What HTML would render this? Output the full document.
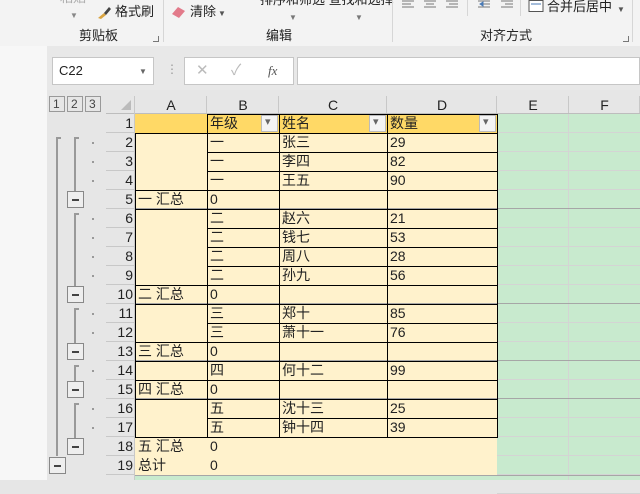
<!DOCTYPE html>
<html><head><meta charset="utf-8">
<style>
*{margin:0;padding:0;box-sizing:border-box}
body{width:640px;height:480px;overflow:hidden;position:relative;background:#e6e6e6;font-family:"Liberation Sans","Noto Sans CJK SC",sans-serif;color:#222}
.a{position:absolute}
.t{position:absolute;font-size:14px;line-height:19px;white-space:nowrap}
.rb{font-size:13px}
</style></head><body>
<!-- ribbon -->
<div class="a" style="left:0;top:0;width:640px;height:46px;background:#f3f3f3"></div>
<div class="a" style="left:0;top:46px;width:47px;height:434px;background:#f7f7f7"></div>
<div class="a" style="left:47px;top:46px;width:593px;height:44px;background:#e8e8e8"></div>
<div class="t rb" style="left:60px;top:-12px;color:#aaa">粘贴</div>
<div class="t" style="left:70px;top:6px;font-size:8px;color:#888">▼</div>
<svg class="a" style="left:96px;top:5px" width="16" height="16"><path d="M2 13 L8 8 L10 10 L5 14Z" fill="#d9a441"/><path d="M8 8 L13 2 L15 4 L10 10Z" fill="#444"/></svg>
<div class="t rb" style="left:115px;top:2px">格式刷</div>
<svg class="a" style="left:171px;top:5px" width="16" height="14"><path d="M1 9 L7 2 L14 6 L8 13Z" fill="#e27a8a"/></svg>
<div class="t rb" style="left:190px;top:2px">清除</div>
<div class="t" style="left:218px;top:4px;font-size:8px;color:#555">▼</div>
<div class="t rb" style="left:260px;top:-10px">排序和筛选 查找和选择</div>
<div class="t" style="left:289px;top:8px;font-size:8px;color:#777">▼</div>
<div class="t" style="left:355px;top:8px;font-size:8px;color:#777">▼</div>
<div class="t rb" style="left:79px;top:26px">剪贴板</div>
<div class="t rb" style="left:266px;top:26px">编辑</div>
<div class="t rb" style="left:480px;top:26px">对齐方式</div>
<div class="a" style="left:163px;top:0;width:1px;height:42px;background:#d6d6d6"></div>
<div class="a" style="left:392px;top:0;width:1px;height:42px;background:#d6d6d6"></div>
<div class="a" style="left:467px;top:0;width:1px;height:16px;background:#d6d6d6"></div>
<div class="a" style="left:520px;top:0;width:1px;height:16px;background:#d6d6d6"></div>
<div class="a" style="left:632px;top:0;width:1px;height:42px;background:#d6d6d6"></div>
<svg class="a" style="left:400px;top:0" width="120" height="12" stroke="#777" stroke-width="1">
<path d="M2 1h12M2 4h9M2 7h12M24 1h12M26 4h8M24 7h12M46 1h12M49 4h9M46 7h12"/>
<path d="M78 1h12M82 4h8M78 7h12M101 1h12M105 4h8M101 7h12" />
<path d="M80 4l3-2v4z M103 4h0" fill="#4a7ab5" stroke="#4a7ab5"/></svg>
<svg class="a" style="left:528px;top:0" width="16" height="13"><rect x="1" y="0.5" width="14" height="11" fill="#fff" stroke="#555"/><path d="M3 4h10" stroke="#4a7ab5"/></svg>
<div class="t rb" style="left:547px;top:-3px">合并后居中</div>
<div class="t" style="left:617px;top:0px;font-size:8px;color:#555">▼</div>
<div class="a" style="left:153px;top:36px;width:6px;height:6px;border-right:1px solid #777;border-bottom:1px solid #777"></div>
<div class="a" style="left:623px;top:36px;width:6px;height:6px;border-right:1px solid #777;border-bottom:1px solid #777"></div>
<!-- formula bar -->
<div class="a" style="left:52px;top:57px;width:102px;height:28px;background:#fff;border:1px solid #c6c6c6"></div>
<div class="t" style="left:59px;top:61px;font-size:13px">C22</div>
<div class="t" style="left:139px;top:62px;font-size:8px;color:#666">▼</div>
<div class="t" style="left:166px;top:60px;color:#999;font-size:12px">⋮</div>
<div class="a" style="left:184px;top:57px;width:110px;height:28px;background:#fff;border:1px solid #c6c6c6"></div>
<div class="t" style="left:196px;top:61px;color:#bbb;font-size:15px">✕</div>
<div class="t" style="left:231px;top:61px;color:#bbb;font-size:15px">✓</div>
<div class="t" style="left:268px;top:61px;color:#555;font-size:13px;font-style:italic;font-family:'Liberation Serif',serif">fx</div>
<div class="a" style="left:297px;top:57px;width:343px;height:28px;background:#fff;border:1px solid #c6c6c6"></div>
<div id="g"></div>
<script>
var g=document.getElementById('g'),h='';
function d(l,t,w,hh,s){h+='<div class="a" style="left:'+l+'px;top:'+t+'px;width:'+w+'px;height:'+hh+'px;'+s+'"></div>';}
function tx(l,t,s,st){h+='<div class="t" style="left:'+l+'px;top:'+t+'px;'+(st||'')+'">'+s+'</div>';}
var X=[135,207,279,387,497,569,640];function Y(r){return 114+19*(r-1);}
// column header
d(106,96,534,18,'background:#e6e6e6');
var L=['A','B','C','D','E','F'];
for(var i=0;i<6;i++){d(X[i+1]-1,96,1,18,'background:#c8c8c8');h+='<div class="t" style="left:'+X[i]+'px;top:96px;width:'+(X[i+1]-X[i])+'px;text-align:center;font-size:14px">'+L[i]+'</div>';}
d(106,113,534,1,'background:#bdbdbd');
h+='<svg class="a" style="left:120px;top:99px" width="12" height="12"><path d="M11 1V11H1Z" fill="#bbb"/></svg>';
// fills
d(135,Y(1),362,19,'background:#ffd966');
d(135,Y(2),362,342,'background:#fff2cc');
d(497,Y(1),143,366,'background:#c8eace');
d(135,475,505,5,'background:#c8eace');
for(var r=1;r<=20;r++){d(497,Y(r)+18,143,1,'background:#d4d4d4');}
d(568,Y(1),1,366,'background:#d4d4d4');
d(135,475,505,1,'background:#a6a6a6');
[5,10,13,15].forEach(function(r){d(106,Y(r)+18,534,1,'background:#a6a6a6');});
// row headers
for(var r=1;r<=19;r++){d(106,Y(r),29,19,'background:#e6e6e6;border-bottom:1px solid #c8c8c8');h+='<div class="t" style="left:106px;top:'+Y(r)+'px;width:27px;text-align:right;font-size:14px">'+r+'</div>';}
d(134,96,1,384,'background:#c8c8c8');
// borders
function box(x1,x2,r1,r2){d(x1,Y(r1),x2-x1+1,Y(r2+1)-Y(r1)+1,'border:1px solid #000');}
for(var r=1;r<=17;r++){for(var c=1;c<4;c++)box(X[c],X[c+1],r,r);}
[[2,4],[5,5],[6,9],[10,10],[11,12],[13,13],[14,14],[15,15],[16,17]].forEach(function(p){box(X[0],X[1],p[0],p[1]);});
// header dropdowns
[261,369,479].forEach(function(x){d(x,Y(1)+1,17,17,'background:#f4f4f4;border:1px solid #bbb');tx(x+4,Y(1)-1,'▾','font-size:11px;color:#666');});
var rows={1:['','年级','姓名','数量'],2:['','一','张三','29'],3:['','一','李四','82'],4:['','一','王五','90'],5:['一 汇总','0','',''],
6:['','二','赵六','21'],7:['','二','钱七','53'],8:['','二','周八','28'],9:['','二','孙九','56'],10:['二 汇总','0','',''],
11:['','三','郑十','85'],12:['','三','萧十一','76'],13:['三 汇总','0','',''],14:['','四','何十二','99'],15:['四 汇总','0','',''],
16:['','五','沈十三','25'],17:['','五','钟十四','39'],18:['五 汇总','0','',''],19:['总计','0','','']};
for(var r in rows){for(var c=0;c<4;c++){if(rows[r][c])tx(X[c]+3,Y(+r),rows[r][c]);}}
// outline
d(47,90,59,390,'background:#e6e6e6');
[49,67,85].forEach(function(x,i){d(x,96,16,16,'background:#e6e6e6;border:1px solid #999');tx(x+4,95,''+(i+1),'font-size:12px;color:#444');});
function minus(x,r){var y=Y(r)+1;d(x,y,17,17,'background:#eee;border:1px solid #888');d(x+5,y+8,7,2,'background:#444');}
function brk(x,r1,yEnd){d(x,Y(r1)+4,2,yEnd-Y(r1)-4,'background:#999');d(x,Y(r1)+4,5,2,'background:#999');}
brk(56,2,456);
[[2,5],[6,10],[11,13],[14,15],[16,18]].forEach(function(p){brk(74,p[0],Y(p[1])+1);minus(67,p[1]);for(var r=p[0];r<p[1];r++)d(92,Y(r)+9,2,2,'background:#999');});
minus(49,19);
g.innerHTML=h;
</script>
</body></html>
